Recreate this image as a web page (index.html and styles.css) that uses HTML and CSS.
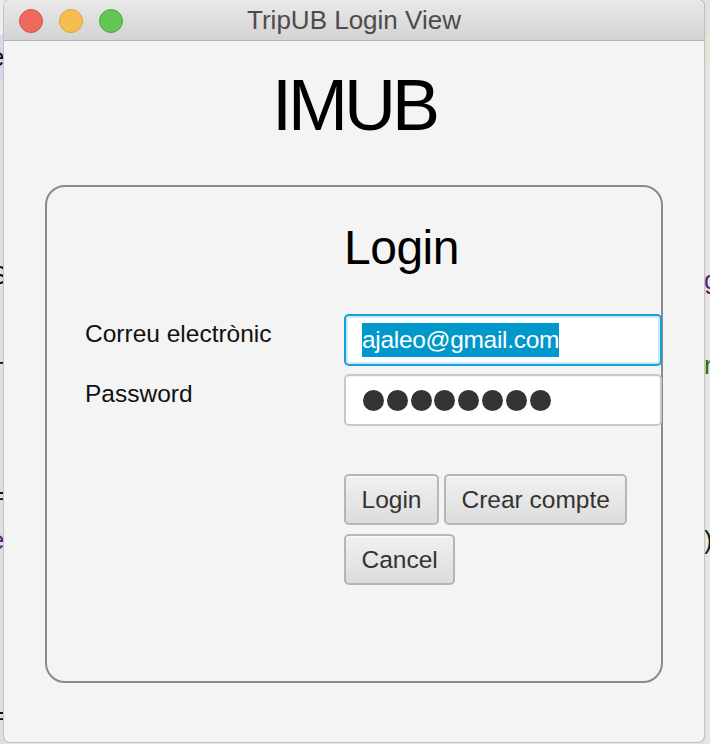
FILE: index.html
```html
<!DOCTYPE html>
<html>
<head>
<meta charset="utf-8">
<link rel="stylesheet" href="styles.css">
</head>
<body>
<div class="backdrop">
  <span class="frag fl" style="top:40px">e</span>
  <span class="frag fl f-purple" style="top:133px">r</span>
  <span class="frag fl" style="top:258px">S</span>
  <span class="frag fl" style="top:345px">+</span>
  <span class="frag fl" style="top:433px">(</span>
  <span class="frag fl" style="top:478px">=</span>
  <span class="frag fl f-purple" style="top:523px">e</span>
  <span class="frag fl" style="top:658px">r</span>
  <span class="frag fl" style="top:698px">=</span>
  <span class="frag fr f-purple" style="top:263px">g</span>
  <span class="frag fr f-green" style="top:348px">r</span>
  <span class="frag fr" style="top:523px">)</span>
</div>
<div class="window">
  <div class="titlebar">
    <div class="lights">
      <span class="light l-red"></span>
      <span class="light l-yellow"></span>
      <span class="light l-green"></span>
    </div>
    <div class="title">TripUB Login View</div>
    <div></div>
  </div>
  <div class="content">
    <h1 class="brand">IMUB</h1>
    <div class="panel">
      <div class="form">
        <div></div>
        <h2 class="heading">Login</h2>
        <label class="label">Correu electrònic</label>
        <div class="field focused"><span class="sel">ajaleo@gmail.com</span></div>
        <label class="label">Password</label>
        <div class="field dots">
          <span class="dot"></span><span class="dot"></span><span class="dot"></span><span class="dot"></span><span class="dot"></span><span class="dot"></span><span class="dot"></span><span class="dot"></span>
        </div>
        <div></div>
        <div class="buttons">
          <button class="btn">Login</button>
          <button class="btn">Crear compte</button>
          <button class="btn">Cancel</button>
        </div>
      </div>
    </div>
  </div>
</div>
</body>
</html>
```

FILE: styles.css
```css
* { box-sizing: border-box; }
html, body { margin: 0; padding: 0; }
body {
  width: 710px;
  height: 744px;
  overflow: hidden;
  position: relative;
  font-family: "Liberation Sans", Arial, sans-serif;
  background:
    linear-gradient(#ececec 0 35px, #d7d7eb 35px 80px, #dedede 80px) left top / 4px 100% no-repeat,
    linear-gradient(#e2e2e2 0 36px, #e9e6d6 36px 70px, #e6e6e6 70px) right top / 6px 100% no-repeat,
    #e4e4e4;
}
.backdrop { position: absolute; inset: 0; }
.frag {
  position: absolute;
  font-size: 26px;
  line-height: 34px;
  color: #111;
}
.fl { left: -10px; }
.fr { left: 704px; }
.f-purple { color: #5b1f73; }
.f-green { color: #2d6b12; }

.window {
  position: relative;
  margin-left: 4px;
  width: 700px;
  height: 742px;
  background: #f4f4f4;
  border-radius: 6px;
  box-shadow: 0 0 0 1px #c2c2c2, 1px 0 1px #9a9a9a;
  display: flex;
  flex-direction: column;
  overflow: hidden;
}
.titlebar {
  height: 41px;
  flex: none;
  background: linear-gradient(#e9e9e9, #d3d3d3);
  border-bottom: 1px solid #b2b2b2;
  display: grid;
  grid-template-columns: 1fr auto 1fr;
  align-items: center;
}
.lights {
  display: flex;
  gap: 16px;
  padding-left: 15px;
  padding-top: 1px;
}
.light {
  width: 24px;
  height: 24px;
  border-radius: 50%;
  display: block;
}
.l-red { background: #ee6a5f; border: 1px solid #d5554a; }
.l-yellow { background: #f6be4f; border: 1px solid #d9a140; }
.l-green { background: #62c554; border: 1px solid #50a73f; }
.title {
  font-size: 26px;
  color: #4c4c4c;
  line-height: 30px;
  margin-top: -1px;
}

.content {
  flex: 1;
  display: flex;
  flex-direction: column;
  align-items: center;
}
.brand {
  margin: 28px 0 0;
  font-size: 72px;
  line-height: 72px;
  font-weight: normal;
  letter-spacing: -4px;
  color: #000;
  padding-left: 0;
}
.panel {
  margin-top: 44px;
  width: 618px;
  height: 498px;
  border: 2px solid #8a8a8a;
  border-radius: 20px;
  padding: 37px 0 0 38px;
}
.form {
  display: grid;
  grid-template-columns: 259px 317px;
  row-gap: 8px;
  align-items: start;
}
.heading {
  margin: 0 0 34px;
  font-size: 48px;
  line-height: 48px;
  font-weight: normal;
  letter-spacing: -0.5px;
  color: #000;
}
.label {
  font-size: 24.5px;
  line-height: 30px;
  padding-top: 5px;
  color: #111;
}
.field {
  height: 52px;
  background: #fff;
  border: 2px solid #c8c8c8;
  border-radius: 5px;
  display: flex;
  align-items: center;
  margin-right: -1px;
  box-shadow: inset 0 1px 1px rgba(0,0,0,0.06);
}
.focused {
  border: 2px solid #169fd6;
  box-shadow: inset 0 0 0 2px #cbe9f6;
  padding-left: 16px;
}
.sel {
  display: inline-block;
  background: #0097ca;
  color: #fff;
  font-size: 24.5px;
  line-height: 34px;
  letter-spacing: -0.3px;
}
.dots {
  padding-left: 17px;
  gap: 2.8px;
}
.dot {
  width: 21px;
  height: 21px;
  border-radius: 50%;
  background: #333;
  display: block;
}
.buttons {
  margin-top: 40px;
  display: flex;
  flex-wrap: wrap;
  column-gap: 5px;
  row-gap: 9px;
}
.btn {
  font-family: "Liberation Sans", Arial, sans-serif;
  font-size: 24.5px;
  line-height: 30px;
  padding: 8.5px 15.5px;
  color: #333;
  background: linear-gradient(#f1f1f1, #dcdcdc);
  border: 2px solid #b6b6b6;
  border-radius: 5px;
  box-shadow: inset 0 1px 0 #fafafa;
  margin: 0;
}
```
